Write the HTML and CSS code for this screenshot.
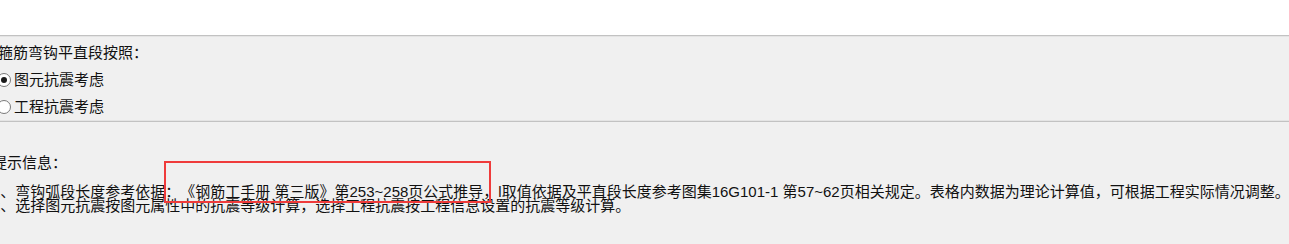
FILE: index.html
```html
<!DOCTYPE html>
<html lang="zh-CN">
<head>
<meta charset="utf-8">
<link rel="stylesheet" href="styles.css">
</head>
<body>
<div class="top"></div>
<section class="panel">
  <div class="panel-title">箍筋弯钩平直段按照：</div>
  <label class="radio-row"><span class="radio checked"></span><span class="radio-text">图元抗震考虑</span></label>
  <label class="radio-row"><span class="radio"></span><span class="radio-text">工程抗震考虑</span></label>
</section>
<section class="tips">
  <div class="tips-title">提示信息：</div>
  <div class="tip-line">1、弯钩弧段长度参考依据：《钢筋工手册 第三版》第253~258页公式推导，l取值依据及平直段长度参考图集16G101-1 第57~62页相关规定。表格内数据为理论计算值，可根据工程实际情况调整。</div>
  <div class="tip-line">2、选择图元抗震按图元属性中的抗震等级计算，选择工程抗震按工程信息设置的抗震等级计算。</div>
  <div class="highlight"></div>
</section>
</body>
</html>
```

FILE: styles.css
```css
html, body {
  margin: 0;
  padding: 0;
}
body {
  width: 1289px;
  height: 244px;
  overflow: hidden;
  background: #f0f0f0;
  color: #111;
  font-family: "Liberation Sans", "Noto Sans CJK SC", sans-serif;
  font-size: 15px;
  text-spacing-trim: space-all;
  position: relative;
}
.top {
  height: 35px;
  background: #ffffff;
}
.panel {
  border-top: 1px solid #c2c2c2;
  border-bottom: 1px solid #c2c2c2;
  box-shadow: inset 0 1px 0 #e4e4e4, inset 0 -1px 0 #e4e4e4;
  background: #f0f0f0;
  padding: 7px 0 0 0;
  height: 78px;
  margin-left: -3px;
  display: flex;
  flex-direction: column;
}
.panel-title {
  line-height: 20px;
  height: 20px;
  padding-left: 1px;
  margin-bottom: 3px;
  white-space: nowrap;
}
.radio-row {
  display: flex;
  align-items: center;
  gap: 3px;
  height: 28px;
  white-space: nowrap;
}
.radio {
  width: 12px;
  height: 12px;
  border: 1px solid #7a7a7a;
  border-radius: 50%;
  background: #ffffff;
  display: flex;
  align-items: center;
  justify-content: center;
  flex: none;
}
.radio.checked::after {
  content: "";
  width: 6px;
  height: 6px;
  border-radius: 50%;
  background: #1a1a1a;
}
.radio-text {
  line-height: 20px;
}
.tips {
  position: relative;
  padding-top: 31px;
  margin-left: -8px;
}
.tips-title {
  line-height: 20px;
  height: 20px;
  margin-bottom: 12px;
  white-space: nowrap;
}
.tip-line {
  line-height: 14px;
  height: 14px;
  white-space: nowrap;
}
.highlight {
  position: absolute;
  left: 172px;
  top: 39px;
  width: 323px;
  height: 38px;
  border: 2px solid #ef3b3b;
}
```
